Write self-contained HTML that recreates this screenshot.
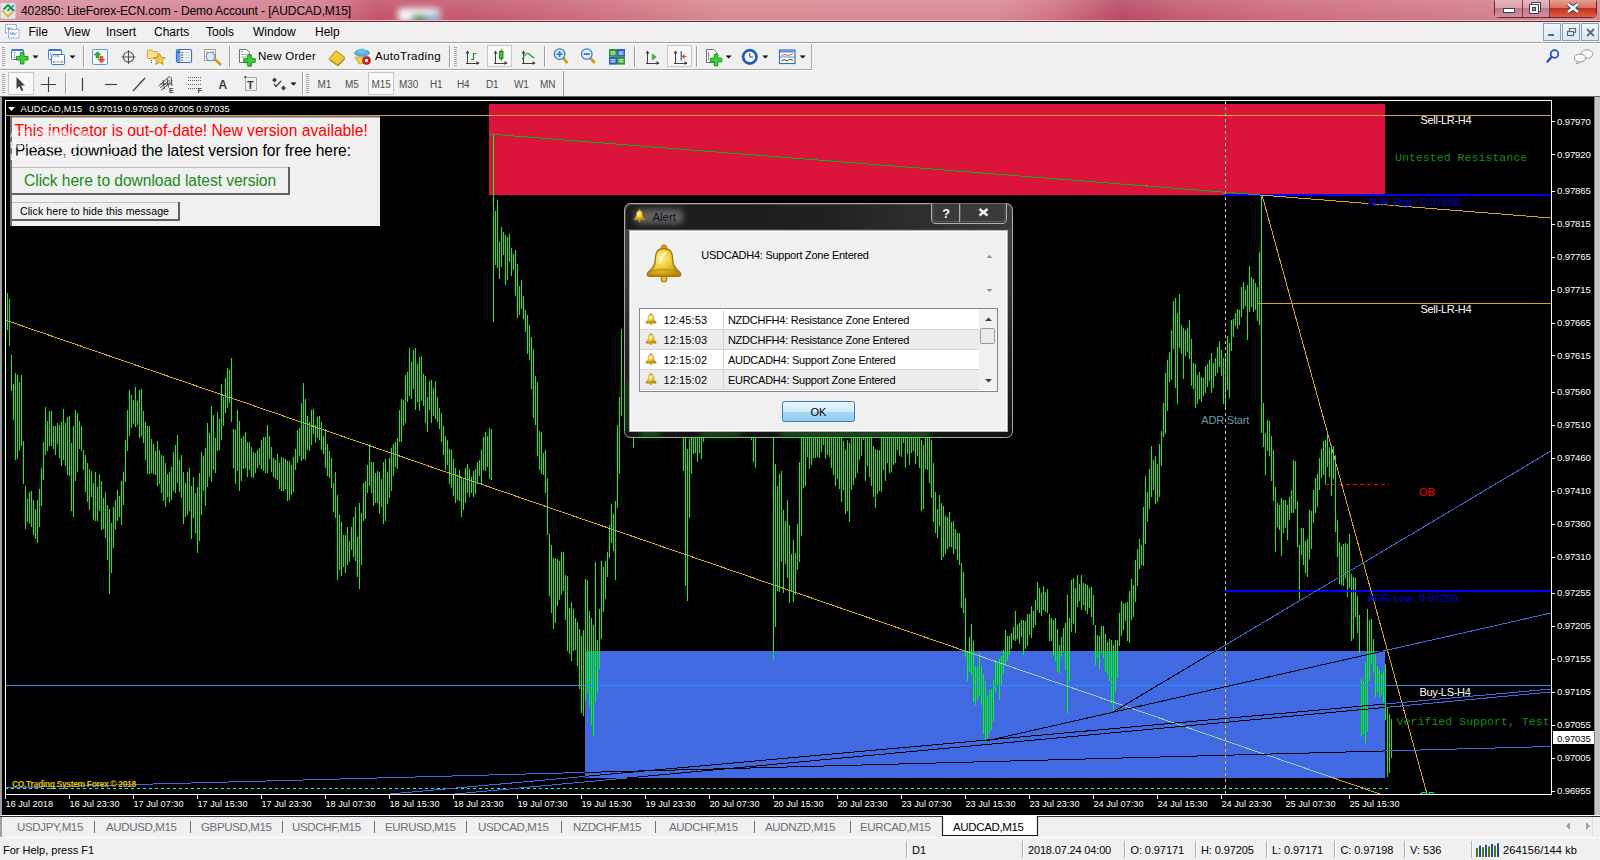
<!DOCTYPE html>
<html><head><meta charset="utf-8"><title>MT4</title>
<style>html,body{margin:0;padding:0;width:1600px;height:860px;overflow:hidden;background:#f0f0f0;}svg{display:block;}</style>
</head><body>
<svg width="1600" height="860" viewBox="0 0 1600 860" font-family="Liberation Sans, sans-serif">
<defs>
<linearGradient id="tb" x1="0" y1="0" x2="1" y2="0">
<stop offset="0" stop-color="#d8a0aa"/><stop offset="0.015" stop-color="#d8909c"/>
<stop offset="0.2" stop-color="#d47c8c"/><stop offset="0.235" stop-color="#c25268"/>
<stop offset="0.3" stop-color="#c45870"/><stop offset="0.36" stop-color="#cc6a7a"/>
<stop offset="0.45" stop-color="#d88890"/><stop offset="0.62" stop-color="#d88a94"/>
<stop offset="0.66" stop-color="#cf7080"/><stop offset="0.7" stop-color="#b84862"/>
<stop offset="0.74" stop-color="#c45a70"/><stop offset="0.8" stop-color="#cc6a7c"/>
<stop offset="0.92" stop-color="#d27c8a"/><stop offset="1" stop-color="#d88892"/></linearGradient>
<filter id="blur3" x="-50%" y="-50%" width="200%" height="200%"><feGaussianBlur stdDeviation="3"/></filter>
<filter id="blur2" x="-50%" y="-50%" width="200%" height="200%"><feGaussianBlur stdDeviation="2"/></filter>
<linearGradient id="tbv" x1="0" y1="0" x2="0" y2="1">
<stop offset="0" stop-color="#fff" stop-opacity="0.12"/><stop offset="1" stop-color="#fff" stop-opacity="0"/></linearGradient>
<linearGradient id="cls" x1="0" y1="0" x2="0" y2="1">
<stop offset="0" stop-color="#e8a090"/><stop offset="0.45" stop-color="#d87060"/><stop offset="0.5" stop-color="#c03020"/><stop offset="1" stop-color="#e06040"/></linearGradient>
<linearGradient id="mnb" x1="0" y1="0" x2="0" y2="1">
<stop offset="0" stop-color="#e8b8c0"/><stop offset="0.45" stop-color="#dca0ac"/><stop offset="0.5" stop-color="#c07888"/><stop offset="1" stop-color="#d090a0"/></linearGradient>
<linearGradient id="mdib" x1="0" y1="0" x2="0" y2="1">
<stop offset="0" stop-color="#f4f8fc"/><stop offset="0.5" stop-color="#e4eef8"/><stop offset="1" stop-color="#dce8f6"/></linearGradient>
<linearGradient id="okb" x1="0" y1="0" x2="0" y2="1">
<stop offset="0" stop-color="#eaf6fd"/><stop offset="0.5" stop-color="#d0ebfa"/><stop offset="0.51" stop-color="#a8d8f6"/><stop offset="1" stop-color="#90cbf0"/></linearGradient>
<linearGradient id="dlgt" x1="0" y1="0" x2="0" y2="1">
<stop offset="0" stop-color="#3a3a3a"/><stop offset="1" stop-color="#101010"/></linearGradient>
<radialGradient id="bell" cx="0.4" cy="0.35" r="0.7">
<stop offset="0" stop-color="#fff4a0"/><stop offset="0.5" stop-color="#f0c830"/><stop offset="1" stop-color="#b88a10"/></radialGradient>
</defs>
<rect x="0" y="0" width="1600" height="21" fill="url(#tb)" />
<rect x="0" y="0" width="1600" height="21" fill="url(#tbv)" />
<g filter="url(#blur3)"><rect x="398" y="8" width="42" height="14" rx="4" fill="#f4f4f8"/><ellipse cx="420" cy="19" rx="9" ry="5" fill="#4a9a60"/><ellipse cx="434" cy="17" rx="5" ry="5" fill="#80b8e0"/></g>
<rect x="0" y="20" width="1600" height="1" fill="#e8c0c8" />
<rect x="0" y="21" width="1600" height="1" fill="#5a3040" />
<rect x="0.5" y="3" width="15" height="15.8" rx="1.5" fill="#e4e8f0" opacity="0.92"/>
<path d="M2 10.5 L8 16.5 L13 11.5" fill="none" stroke="#e0b020" stroke-width="1.7"/>
<path d="M3.5 9.5 L8 5 L14 11" fill="none" stroke="#109030" stroke-width="1.8"/><path d="M7.5 11 L11 7.5" stroke="#109030" stroke-width="1.6"/>
<path d="M11.2 7.8 L14 5" stroke="#2080d0" stroke-width="1.5"/>
<text x="21" y="15" font-family="Liberation Sans" font-size="12" fill="#000" text-anchor="start" font-weight="normal" letter-spacing="-0.1" >402850: LiteForex-ECN.com - Demo Account - [AUDCAD,M15]</text>
<rect x="1494.5" y="-2" width="102" height="19.5" rx="4" fill="none" stroke="#5a2a30" stroke-width="1"/>
<rect x="1495" y="0" width="27" height="17" fill="url(#mnb)" />
<rect x="1523" y="0" width="26" height="17" fill="url(#mnb)" />
<rect x="1550" y="0" width="46" height="17" fill="url(#cls)" />
<line x1="1522.5" y1="0" x2="1522.5" y2="17" stroke="#7a3a48" stroke-width="1" />
<line x1="1549.5" y1="0" x2="1549.5" y2="17" stroke="#7a3a48" stroke-width="1" />
<rect x="1503.5" y="8.5" width="11" height="4" fill="#fff" stroke="#404050" stroke-width="1"/>
<rect x="1531" y="2" width="10" height="10" rx="1" fill="#404050"/><rect x="1532" y="3" width="8" height="8" fill="#fafafa"/>
<rect x="1529" y="4" width="10" height="10" rx="1" fill="#404050"/><rect x="1530" y="5" width="8" height="8" fill="#fafafa"/><rect x="1532" y="7" width="4" height="4" fill="#404050"/><rect x="1533" y="8" width="2" height="2" fill="#d08890"/>
<path d="M1568 4 L1578 12 M1578 4 L1568 12" stroke="#404050" stroke-width="4.2"/><path d="M1568 4 L1578 12 M1578 4 L1568 12" stroke="#fff" stroke-width="2.4"/>
<rect x="0" y="22" width="1600" height="20" fill="#f0f0f0" />
<rect x="0" y="42" width="1600" height="1" fill="#a0a0a0" />
<rect x="0" y="43" width="1600" height="1" fill="#ffffff" />
<rect x="5.5" y="24.5" width="11" height="8.5" fill="#fff" stroke="#5a8ee0" stroke-width="1" stroke-dasharray="1 0.6"/>
<path d="M7.5 28.5 H10 M8.5 27.5 L7.5 28.5 L8.5 29.5 M10.5 27 L12 28.5 L10.5 30" fill="none" stroke="#4070d0" stroke-width="0.8"/>
<rect x="8.5" y="29.5" width="10.5" height="8.5" fill="#fff" stroke="#5a8ee0" stroke-width="1" stroke-dasharray="1 0.6"/>
<path d="M10 32 L11.5 35 L13 32.5 L14.5 35 L16.5 32.5" fill="none" stroke="#4070d0" stroke-width="0.8"/>
<text x="28.5" y="35.5" font-family="Liberation Sans" font-size="12" fill="#000" text-anchor="start" font-weight="normal" >File</text>
<text x="64" y="35.5" font-family="Liberation Sans" font-size="12" fill="#000" text-anchor="start" font-weight="normal" >View</text>
<text x="106" y="35.5" font-family="Liberation Sans" font-size="12" fill="#000" text-anchor="start" font-weight="normal" >Insert</text>
<text x="154" y="35.5" font-family="Liberation Sans" font-size="12" fill="#000" text-anchor="start" font-weight="normal" >Charts</text>
<text x="206" y="35.5" font-family="Liberation Sans" font-size="12" fill="#000" text-anchor="start" font-weight="normal" >Tools</text>
<text x="253" y="35.5" font-family="Liberation Sans" font-size="12" fill="#000" text-anchor="start" font-weight="normal" >Window</text>
<text x="315" y="35.5" font-family="Liberation Sans" font-size="12" fill="#000" text-anchor="start" font-weight="normal" >Help</text>
<rect x="1543.5" y="23.5" width="17" height="17" fill="url(#mdib)" stroke="#8aa0b8" stroke-width="1"/>
<rect x="1562.5" y="23.5" width="17" height="17" fill="url(#mdib)" stroke="#8aa0b8" stroke-width="1"/>
<rect x="1581.5" y="23.5" width="17" height="17" fill="url(#mdib)" stroke="#8aa0b8" stroke-width="1"/>
<rect x="1548" y="34" width="6" height="2" fill="#606870" />
<rect x="1567.5" y="31.5" width="6" height="4" fill="none" stroke="#606870" stroke-width="1.2"/><path d="M1569.5 31 V28.5 H1575.5 V32.5 H1573.5" fill="none" stroke="#606870" stroke-width="1.2"/>
<path d="M1587 29 L1594 36 M1594 29 L1587 36" stroke="#606870" stroke-width="1.8"/>
<rect x="0" y="44" width="1600" height="25" fill="#f0f0f0" />
<rect x="0" y="69" width="812" height="1" fill="#a8a8a8" />
<rect x="0" y="70" width="812" height="1" fill="#ffffff" />
<rect x="811" y="44" width="1" height="26" fill="#b0b0b0" />
<rect x="2" y="47" width="3" height="1" fill="#a8a8a8" /><rect x="2" y="49" width="3" height="1" fill="#a8a8a8" /><rect x="2" y="51" width="3" height="1" fill="#a8a8a8" /><rect x="2" y="53" width="3" height="1" fill="#a8a8a8" /><rect x="2" y="55" width="3" height="1" fill="#a8a8a8" /><rect x="2" y="57" width="3" height="1" fill="#a8a8a8" /><rect x="2" y="59" width="3" height="1" fill="#a8a8a8" /><rect x="2" y="61" width="3" height="1" fill="#a8a8a8" /><rect x="2" y="63" width="3" height="1" fill="#a8a8a8" /><rect x="2" y="65" width="3" height="1" fill="#a8a8a8" />
<rect x="11.5" y="49.5" width="12" height="10" rx="1" fill="#fff" stroke="#3a78c8" stroke-width="1"/><rect x="11.5" y="49.5" width="12" height="1.5" fill="#3a78c8"/>
<path d="M14.5 52 V58 M13.5 53 L14.5 52 L15.5 53 M13.5 57 L14.5 58 L15.5 57" stroke="#8aa0c0" fill="none" stroke-width="0.8"/>
<path d="M20.4 52.45 H24.0 V56.400000000000006 H27.95 V60.0 H24.0 V63.95 H20.4 V60.0 H16.45 V56.400000000000006 H20.4 Z" fill="#3ad23a" stroke="#118a11" stroke-width="0.9"/>
<path d="M32.5 55.5 L38.5 55.5 L35.5 58.5 Z" fill="#000"/>
<rect x="48.5" y="49.5" width="13" height="10" rx="1" fill="#fff" stroke="#3a78c8"/><rect x="48.5" y="49.5" width="13" height="1.5" fill="#3a78c8"/>
<rect x="51.5" y="54.5" width="13" height="10" rx="1" fill="#fff" stroke="#3a78c8"/>
<path d="M50.5 52.5 V55 M50.5 56 H59 M57.5 55 L59 56 L57.5 57 M53 62 H63 M54.5 61 L53 62 L54.5 63 M61.5 61 L63 62 L61.5 63" stroke="#7890b0" fill="none" stroke-width="0.8"/>
<path d="M69.5 55.5 L75.5 55.5 L72.5 58.5 Z" fill="#000"/>
<rect x="83" y="46" width="1" height="21" fill="#a0a0a0" /><rect x="84" y="46" width="1" height="21" fill="#ffffff" />
<rect x="92.5" y="49.5" width="15" height="15" rx="1.5" fill="#fff" stroke="#5a9ae0" stroke-width="1"/>
<path d="M101 52 H106 M101 54.5 H106 M99 57 H106 M97 59.5 H106 M95 62 H106" stroke="#e0e0e0" stroke-width="0.8" stroke-dasharray="1 1"/>
<path d="M97.5 51.5 L101 55 H99 V58 H96 V55 H94 Z" fill="#30b030" stroke="#1a801a" stroke-width="0.5"/>
<path d="M101.5 63 L105 59.5 H103 V56.5 H100 V59.5 H98 Z" fill="#e85a30" stroke="#b03010" stroke-width="0.5"/>
<g stroke="#505050" fill="none" stroke-width="1.1"><circle cx="128.5" cy="57" r="5.2"/><path d="M128.5 50 V64 M121.5 57 H135.5"/></g>
<path d="M147.5 50 H152 L153 51.5 H157.5 V58.5 H147.5 Z" fill="#f8e08a" stroke="#c8a040" stroke-width="0.8"/>
<path d="M151.5 60 V64" stroke="#404040" stroke-width="0.9" stroke-dasharray="1 1"/>
<path d="M159.5 53.5 L161.3 57.3 L165.3 57.7 L162.3 60.4 L163.2 64.4 L159.5 62.3 L155.8 64.4 L156.7 60.4 L153.7 57.7 L157.7 57.3 Z" fill="#f2cc40" stroke="#b88a10" stroke-width="0.8"/>
<rect x="176.5" y="49.5" width="15" height="13" rx="1.5" fill="#fff" stroke="#3a70c0" stroke-width="1.2"/><rect x="177" y="50" width="3.5" height="12" fill="#6a9ae0"/>
<path d="M182 52.5 H190 M182 55 H190 M182 57.5 H190 M182 60 H190" stroke="#a8c0f0" stroke-width="0.7"/>
<circle cx="178.8" cy="52.2" r="0.7" fill="#000"/><circle cx="182" cy="52.5" r="0.7" fill="#e00"/><circle cx="182" cy="55" r="0.7" fill="#000"/><circle cx="182" cy="57.5" r="0.7" fill="#000"/><circle cx="182" cy="60" r="0.7" fill="#e00"/>
<rect x="204.5" y="49.5" width="11" height="11" fill="#fff" stroke="#a09080" stroke-width="0.9"/>
<path d="M207 51 V59 M213 51 V59" stroke="#606060" stroke-width="0.7"/>
<path d="M214 58.5 L221 65" stroke="#c8a020" stroke-width="2.4"/>
<circle cx="210.5" cy="56.5" r="4.3" fill="#d8ecfa" fill-opacity="0.85" stroke="#5a90d0" stroke-width="1.1"/>
<rect x="229" y="46" width="1" height="21" fill="#a0a0a0" /><rect x="230" y="46" width="1" height="21" fill="#ffffff" />
<path d="M239.5 49.5 H246.5 L249.5 52.5 V62.5 H239.5 Z" fill="#fff" stroke="#606060" stroke-width="0.9"/><path d="M241 51.5 H243 M241 54.5 H247 M241 57 H247" stroke="#909090" stroke-width="0.8"/>
<path d="M247.7 54.75 H251.3 V58.7 H255.25 V62.3 H251.3 V66.25 H247.7 V62.3 H243.75 V58.7 H247.7 Z" fill="#3ad23a" stroke="#118a11" stroke-width="0.9"/>
<text x="258" y="59.7" font-family="Liberation Sans" font-size="11.5" fill="#000" text-anchor="start" font-weight="normal" letter-spacing="0.27" >New Order</text>
<path d="M329 59 L336 50.5 L345 57.5 L338 65 Z" fill="#f0c838" stroke="#a07010" stroke-width="0.8"/><path d="M330 60.5 L338 66 L345 59" fill="none" stroke="#b88a20" stroke-width="1"/>
<path d="M355 57 L369 57 L367 63 L359 64 Z" fill="#f2d050" stroke="#b89020" stroke-width="0.7"/>
<ellipse cx="362" cy="53" rx="7.5" ry="3.2" fill="#60b0e0" stroke="#3080b0" stroke-width="0.6"/><ellipse cx="362" cy="51" rx="4" ry="2.5" fill="#70c0f0"/>
<circle cx="366.5" cy="60.5" r="4" fill="#d82020" stroke="#a01010" stroke-width="0.6"/><rect x="365" y="59" width="3" height="3" fill="#fff"/>
<text x="375" y="59.7" font-family="Liberation Sans" font-size="11.5" fill="#000" text-anchor="start" font-weight="normal" letter-spacing="0.34" >AutoTrading</text>
<rect x="449" y="46" width="1" height="21" fill="#a0a0a0" /><rect x="450" y="46" width="1" height="21" fill="#ffffff" />
<rect x="454" y="47" width="3" height="1" fill="#a8a8a8" /><rect x="454" y="49" width="3" height="1" fill="#a8a8a8" /><rect x="454" y="51" width="3" height="1" fill="#a8a8a8" /><rect x="454" y="53" width="3" height="1" fill="#a8a8a8" /><rect x="454" y="55" width="3" height="1" fill="#a8a8a8" /><rect x="454" y="57" width="3" height="1" fill="#a8a8a8" /><rect x="454" y="59" width="3" height="1" fill="#a8a8a8" /><rect x="454" y="61" width="3" height="1" fill="#a8a8a8" /><rect x="454" y="63" width="3" height="1" fill="#a8a8a8" /><rect x="454" y="65" width="3" height="1" fill="#a8a8a8" />
<g stroke="#404040" stroke-width="1" fill="none" shape-rendering="crispEdges"><path d="M467.5 51.5 V64.0 M465.5 63.0 H478.5"/></g><path d="M465.5 53.5 L467.5 50.5 L469.5 53.5 Z M476.5 61.0 L479.5 63.0 L476.5 65.0 Z" fill="#404040"/>
<path d="M473.5 53 V60 M473.5 53.5 H476.5 M473.5 59.5 H471" stroke="#209020" stroke-width="1.2" fill="none"/>
<rect x="487.5" y="45.5" width="24" height="21" fill="#f8f8f8" stroke="#c8c8c8" stroke-width="1"/>
<g stroke="#404040" stroke-width="1" fill="none" shape-rendering="crispEdges"><path d="M495.5 51.5 V64.0 M493.5 63.0 H506.5"/></g><path d="M493.5 53.5 L495.5 50.5 L497.5 53.5 Z M504.5 61.0 L507.5 63.0 L504.5 65.0 Z" fill="#404040"/>
<path d="M501.2 49 V61" stroke="#107010" stroke-width="1"/><rect x="499.5" y="51.5" width="3.5" height="7" fill="#30d030" stroke="#107010" stroke-width="0.8"/>
<g stroke="#404040" stroke-width="1" fill="none" shape-rendering="crispEdges"><path d="M523.5 51.5 V64.0 M521.5 63.0 H534.5"/></g><path d="M521.5 53.5 L523.5 50.5 L525.5 53.5 Z M532.5 61.0 L535.5 63.0 L532.5 65.0 Z" fill="#404040"/>
<path d="M522 59.5 Q527 51 529 54 L534 58" stroke="#209020" stroke-width="1.1" fill="none"/>
<rect x="544" y="46" width="1" height="21" fill="#a0a0a0" /><rect x="545" y="46" width="1" height="21" fill="#ffffff" />

<path d="M563.1 58 L567.6 63" stroke="#c8a020" stroke-width="2.8"/>
<circle cx="559.6" cy="54.1" r="5.3" fill="#e0f0fc" stroke="#3a78c8" stroke-width="1.3"/>
<path d="M556.6 54.1 H562.6 M559.6 51.1 V57.1" stroke="#3a78c8" stroke-width="1.8"/>

<path d="M590.3 58 L594.8 63" stroke="#c8a020" stroke-width="2.8"/>
<circle cx="586.8" cy="54.1" r="5.3" fill="#e0f0fc" stroke="#3a78c8" stroke-width="1.3"/>
<path d="M583.8 54.1 H589.8" stroke="#3a78c8" stroke-width="1.8"/>
<rect x="609" y="49" width="8" height="7.8" fill="#2e9a2e"/><rect x="617" y="49" width="8" height="7.8" fill="#2a5ec8"/><rect x="609" y="56.8" width="8" height="7.8" fill="#2a5ec8"/><rect x="617" y="56.8" width="8" height="7.8" fill="#2e9a2e"/>
<path d="M610.5 52 H615.5 M618.5 52 H623.5 M610.5 59.8 H615.5 M618.5 59.8 H623.5 M610.5 54 H615.5 M618.5 54 H623.5 M610.5 61.8 H615.5 M618.5 61.8 H623.5" stroke="#fff" stroke-width="1"/>
<rect x="634" y="46" width="1" height="21" fill="#a0a0a0" /><rect x="635" y="46" width="1" height="21" fill="#ffffff" />
<g stroke="#404040" stroke-width="1" fill="none" shape-rendering="crispEdges"><path d="M647.5 51.5 V64.0 M645.5 63.0 H658.5"/></g><path d="M645.5 53.5 L647.5 50.5 L649.5 53.5 Z M656.5 61.0 L659.5 63.0 L656.5 65.0 Z" fill="#404040"/>
<path d="M652.3 54 L656.3 57 L652.3 60 Z" fill="#40c040" stroke="#209020" stroke-width="0.6"/>
<rect x="667.5" y="45.5" width="24" height="21" fill="#f8f8f8" stroke="#c8c8c8" stroke-width="1"/>
<g stroke="#404040" stroke-width="1" fill="none" shape-rendering="crispEdges"><path d="M675.5 51.5 V64.0 M673.5 63.0 H686.5"/></g><path d="M673.5 53.5 L675.5 50.5 L677.5 53.5 Z M684.5 61.0 L687.5 63.0 L684.5 65.0 Z" fill="#404040"/>
<path d="M681.2 51 V60.5" stroke="#2a60a0" stroke-width="1.2"/><path d="M686.5 56.5 H683 M684.5 54.5 L682.5 56.5 L684.5 58.5" stroke="#e05020" stroke-width="1.2" fill="none"/>
<rect x="696" y="46" width="1" height="21" fill="#a0a0a0" /><rect x="697" y="46" width="1" height="21" fill="#ffffff" />
<path d="M706.5 49.5 H713.5 L716.5 52.5 V62.5 H706.5 Z" fill="#fff" stroke="#606060" stroke-width="0.9"/><path d="M708.5 52 V60 M708 55 H710" stroke="#707070" stroke-width="0.7"/>
<path d="M714.2 54.25 H717.8 V58.2 H721.75 V61.8 H717.8 V65.75 H714.2 V61.8 H710.25 V58.2 H714.2 Z" fill="#3ad23a" stroke="#118a11" stroke-width="0.9"/>
<path d="M725.6 55.5 L731.6 55.5 L728.6 58.5 Z" fill="#000"/>
<circle cx="749.8" cy="56.8" r="7.6" fill="#1e5ec0" stroke="#14408a" stroke-width="0.7"/><circle cx="749.8" cy="56.8" r="5.3" fill="#f8f8f8"/><path d="M749.8 53 V57 H753" stroke="#303030" stroke-width="0.9" fill="none"/>
<path d="M762.4 55.5 L768.4 55.5 L765.4 58.5 Z" fill="#000"/>
<rect x="779.5" y="50" width="15.5" height="13.5" fill="#fff" stroke="#3a70c0" stroke-width="1.2"/><rect x="780" y="50.5" width="14.5" height="2" fill="#5a90e0"/><path d="M780 57 H795" stroke="#3a70c0" stroke-width="0.8"/>
<path d="M781.5 55.5 L785 54.5 L788 55.5 L793 53.8 M781.5 61 L784 59.5 L787 61 L790 59.2 L793 60.5" fill="none" stroke="#c03020" stroke-width="0.8"/>
<path d="M781.5 61 L784 59.5 L787 61 L790 59.2 L793 60.5" fill="none" stroke="#209020" stroke-width="0.9"/>
<path d="M799.6 55.5 L805.6 55.5 L802.6 58.5 Z" fill="#000"/>
<circle cx="1554.5" cy="54" r="3.8" fill="none" stroke="#2050c0" stroke-width="1.7"/><path d="M1551.5 57 L1547.5 61.5" stroke="#2050c0" stroke-width="2.4" stroke-linecap="round"/>
<g fill="#f8f8f8" stroke="#909090" stroke-width="0.9"><ellipse cx="1587" cy="54" rx="6" ry="4.3"/><ellipse cx="1580" cy="58" rx="5.5" ry="4"/><path d="M1577.5 61.5 L1576.5 64 L1580.5 61.8"/></g>
<rect x="0" y="71" width="1600" height="25" fill="#f0f0f0" />
<rect x="0" y="96" width="1600" height="1" fill="#a0a0a0" />
<rect x="2" y="74" width="3" height="1" fill="#a8a8a8" /><rect x="2" y="76" width="3" height="1" fill="#a8a8a8" /><rect x="2" y="78" width="3" height="1" fill="#a8a8a8" /><rect x="2" y="80" width="3" height="1" fill="#a8a8a8" /><rect x="2" y="82" width="3" height="1" fill="#a8a8a8" /><rect x="2" y="84" width="3" height="1" fill="#a8a8a8" /><rect x="2" y="86" width="3" height="1" fill="#a8a8a8" /><rect x="2" y="88" width="3" height="1" fill="#a8a8a8" /><rect x="2" y="90" width="3" height="1" fill="#a8a8a8" /><rect x="2" y="92" width="3" height="1" fill="#a8a8a8" />
<rect x="8.5" y="72.5" width="25" height="22" fill="#f8f8f8" stroke="#c8c8c8" stroke-width="1"/>
<path d="M16.5 77 L16.5 89 L19.3 86.3 L21.5 91 L23.3 90.2 L21.2 85.6 L25 85.4 Z" fill="#404040"/>
<path d="M41 84.5 H56 M48.5 77 V92" stroke="#404040" stroke-width="1.1"/>
<rect x="65" y="73" width="1" height="21" fill="#a0a0a0" /><rect x="66" y="73" width="1" height="21" fill="#ffffff" />
<line x1="82.5" y1="78" x2="82.5" y2="91" stroke="#404040" stroke-width="1.2" />
<line x1="105" y1="84.5" x2="117" y2="84.5" stroke="#404040" stroke-width="1.2" />
<line x1="133" y1="91" x2="145" y2="78" stroke="#404040" stroke-width="1.2" />
<g stroke="#404040" stroke-width="0.9" fill="none"><path d="M158.5 86 L170 76 M161 90.5 L172.5 80.5 M160.5 84 L172 84 M160 88 L170 80 M163 80 L164.5 89 M167 78.5 L168.5 87.5 M171 77 L172 86"/></g>
<text x="169" y="93" font-family="Liberation Sans" font-size="7" fill="#404040" text-anchor="start" font-weight="bold" >E</text>
<g><rect x="188" y="77" width="1" height="1" fill="#606060" /><rect x="190" y="77" width="1" height="1" fill="#606060" /><rect x="192" y="77" width="1" height="1" fill="#606060" /><rect x="194" y="77" width="1" height="1" fill="#606060" /><rect x="196" y="77" width="1" height="1" fill="#606060" /><rect x="198" y="77" width="1" height="1" fill="#606060" /><rect x="200" y="77" width="1" height="1" fill="#606060" /><rect x="188" y="80" width="1" height="1" fill="#606060" /><rect x="190" y="80" width="1" height="1" fill="#606060" /><rect x="192" y="80" width="1" height="1" fill="#606060" /><rect x="194" y="80" width="1" height="1" fill="#606060" /><rect x="196" y="80" width="1" height="1" fill="#606060" /><rect x="198" y="80" width="1" height="1" fill="#606060" /><rect x="200" y="80" width="1" height="1" fill="#606060" /><rect x="188" y="84" width="1" height="1" fill="#606060" /><rect x="190" y="84" width="1" height="1" fill="#606060" /><rect x="192" y="84" width="1" height="1" fill="#606060" /><rect x="194" y="84" width="1" height="1" fill="#606060" /><rect x="196" y="84" width="1" height="1" fill="#606060" /><rect x="198" y="84" width="1" height="1" fill="#606060" /><rect x="200" y="84" width="1" height="1" fill="#606060" /><rect x="188" y="88" width="1" height="1" fill="#606060" /><rect x="190" y="88" width="1" height="1" fill="#606060" /><rect x="192" y="88" width="1" height="1" fill="#606060" /><rect x="194" y="88" width="1" height="1" fill="#606060" /><rect x="196" y="88" width="1" height="1" fill="#606060" /><rect x="198" y="88" width="1" height="1" fill="#606060" /><rect x="200" y="88" width="1" height="1" fill="#606060" /></g>
<text x="197.5" y="93" font-family="Liberation Sans" font-size="7" fill="#404040" text-anchor="start" font-weight="bold" >F</text>
<text x="218.5" y="89" font-family="Liberation Sans" font-size="12" fill="#404040" text-anchor="start" font-weight="bold" >A</text>
<rect x="245.5" y="77.5" width="11" height="13" fill="none" stroke="#505050" stroke-width="0.9" stroke-dasharray="1 1"/><path d="M244 76 L247 76.5 L245 78.5 Z" fill="#404040"/>
<text x="247" y="88.5" font-family="Liberation Sans" font-size="11" fill="#404040" text-anchor="start" font-weight="bold" >T</text>
<path d="M272 80 L274.5 77.5 L277 80 L274.5 82.5 Z M281 88 L283.5 85.5 L286 88 L283.5 90.5 Z" fill="#404040"/><path d="M274 84 L276 86.5 L281 81" stroke="#404040" stroke-width="1.3" fill="none"/>
<path d="M290.5 82.5 L296.5 82.5 L293.5 85.5 Z" fill="#000"/>
<rect x="302" y="72" width="1" height="23" fill="#a0a0a0" /><rect x="303" y="72" width="1" height="23" fill="#ffffff" />
<rect x="306" y="74" width="3" height="1" fill="#a8a8a8" /><rect x="306" y="76" width="3" height="1" fill="#a8a8a8" /><rect x="306" y="78" width="3" height="1" fill="#a8a8a8" /><rect x="306" y="80" width="3" height="1" fill="#a8a8a8" /><rect x="306" y="82" width="3" height="1" fill="#a8a8a8" /><rect x="306" y="84" width="3" height="1" fill="#a8a8a8" /><rect x="306" y="86" width="3" height="1" fill="#a8a8a8" /><rect x="306" y="88" width="3" height="1" fill="#a8a8a8" /><rect x="306" y="90" width="3" height="1" fill="#a8a8a8" /><rect x="306" y="92" width="3" height="1" fill="#a8a8a8" />
<rect x="368.5" y="72.5" width="25" height="22" fill="#f8f8f8" stroke="#c8c8c8" stroke-width="1"/>
<text x="317.5" y="88" font-family="Liberation Sans" font-size="10" fill="#505050" text-anchor="start" font-weight="normal" letter-spacing="-0.1" >M1</text>
<text x="345" y="88" font-family="Liberation Sans" font-size="10" fill="#505050" text-anchor="start" font-weight="normal" letter-spacing="-0.1" >M5</text>
<text x="371.5" y="88" font-family="Liberation Sans" font-size="10" fill="#505050" text-anchor="start" font-weight="normal" letter-spacing="-0.1" >M15</text>
<text x="399" y="88" font-family="Liberation Sans" font-size="10" fill="#505050" text-anchor="start" font-weight="normal" letter-spacing="-0.1" >M30</text>
<text x="430" y="88" font-family="Liberation Sans" font-size="10" fill="#505050" text-anchor="start" font-weight="normal" letter-spacing="-0.1" >H1</text>
<text x="457" y="88" font-family="Liberation Sans" font-size="10" fill="#505050" text-anchor="start" font-weight="normal" letter-spacing="-0.1" >H4</text>
<text x="486" y="88" font-family="Liberation Sans" font-size="10" fill="#505050" text-anchor="start" font-weight="normal" letter-spacing="-0.1" >D1</text>
<text x="514" y="88" font-family="Liberation Sans" font-size="10" fill="#505050" text-anchor="start" font-weight="normal" letter-spacing="-0.1" >W1</text>
<text x="540" y="88" font-family="Liberation Sans" font-size="10" fill="#505050" text-anchor="start" font-weight="normal" letter-spacing="-0.1" >MN</text>
<rect x="563" y="71" width="1" height="25" fill="#a0a0a0" />
<rect x="0" y="97" width="1600" height="718" fill="#000" />
<rect x="0" y="97" width="2" height="718" fill="#a0a0a0" />
<rect x="1594" y="97" width="6" height="718" fill="#c4c4c4" />
<rect x="1594" y="97" width="1" height="718" fill="#808080" />
<rect x="0" y="96" width="1600" height="1" fill="#606060" />
<rect x="489" y="104" width="896" height="91" fill="#DC143C" />
<rect x="585" y="651" width="800" height="127" fill="#4169E1" />
<path d="M5.5 294V338M7.5 293V330M9.5 299V346M11.5 355V391M13.5 384V420M15.5 373V460M17.5 375V459M19.5 382V451M21.5 375V446M23.5 441V484M25.5 486V529M27.5 499V522M29.5 492V524M31.5 491V527M33.5 500V535M35.5 509V539M37.5 500V543M39.5 489V527M41.5 468V506M43.5 442V480M45.5 407V455M47.5 421V451M49.5 411V446M51.5 411V446M53.5 426V449M55.5 426V455M57.5 423V444M59.5 425V458M61.5 422V466M63.5 409V460M65.5 423V466M67.5 417V475M69.5 416V476M71.5 443V511M73.5 426V517M75.5 410V481M77.5 413V472M79.5 421V449M81.5 426V451M83.5 450V470M85.5 455V492M87.5 463V502M89.5 469V510M91.5 471V497M93.5 483V520M95.5 472V521M97.5 487V521M99.5 474V511M101.5 481V530M103.5 498V529M105.5 492V538M107.5 505V560M109.5 509V594M111.5 523V573M113.5 507V548M115.5 500V530M117.5 490V521M119.5 496V517M121.5 481V525M123.5 472V505M125.5 440V482M127.5 410V451M129.5 390V436M131.5 395V428M133.5 400V424M135.5 387V427M137.5 401V425M139.5 390V438M141.5 389V436M143.5 411V443M145.5 422V460M147.5 426V474M149.5 426V474M151.5 439V473M153.5 444V474M155.5 451V475M157.5 441V486M159.5 450V484M161.5 455V493M163.5 456V501M165.5 463V507M167.5 474V497M169.5 472V502M171.5 467V500M173.5 452V491M175.5 445V493M177.5 435V483M179.5 460V492M181.5 455V498M183.5 472V524M185.5 483V517M187.5 472V515M189.5 468V511M191.5 486V539M193.5 477V518M195.5 493V533M197.5 487V553M199.5 473V541M201.5 452V515M203.5 456V491M205.5 448V506M207.5 423V487M209.5 433V477M211.5 406V482M213.5 415V470M215.5 438V473M217.5 412V451M219.5 419V450M221.5 384V440M223.5 397V426M225.5 378V413M227.5 368V408M229.5 370V403M231.5 358V422M233.5 429V468M235.5 430V484M237.5 410V471M239.5 421V491M241.5 438V481M243.5 436V469M245.5 432V468M247.5 442V477M249.5 442V470M251.5 447V477M253.5 452V478M255.5 453V473M257.5 450V468M259.5 448V465M261.5 440V469M263.5 437V471M265.5 437V473M267.5 425V473M269.5 436V459M271.5 447V472M273.5 458V477M275.5 460V479M277.5 454V480M279.5 463V489M281.5 457V491M283.5 458V491M285.5 459V489M287.5 461V501M289.5 461V500M291.5 465V495M293.5 457V492M295.5 449V470M297.5 430V463M299.5 428V456M301.5 403V461M303.5 383V459M305.5 399V460M307.5 416V450M309.5 422V451M311.5 410V445M313.5 409V434M315.5 425V443M317.5 417V438M319.5 416V440M321.5 422V450M323.5 436V454M325.5 429V468M327.5 444V476M329.5 451V478M331.5 458V488M333.5 483V512M335.5 472V518M337.5 495V580M339.5 515V570M341.5 522V576M343.5 535V567M345.5 535V573M347.5 527V565M349.5 541V562M351.5 527V550M353.5 517V557M355.5 507V561M357.5 537V577M359.5 503V589M361.5 513V565M363.5 483V521M365.5 481V519M367.5 465V493M369.5 444V486M371.5 462V493M373.5 462V506M375.5 473V503M377.5 471V503M379.5 472V514M381.5 479V507M383.5 462V524M385.5 459V521M387.5 472V504M389.5 458V498M391.5 448V491M393.5 444V476M395.5 442V467M397.5 438V469M399.5 410V442M401.5 399V442M403.5 400V426M405.5 375V423M407.5 372V402M409.5 348V396M411.5 362V399M413.5 350V389M415.5 348V410M417.5 364V402M419.5 357V411M421.5 356V401M423.5 374V406M425.5 376V423M427.5 397V432M429.5 381V410M431.5 380V423M433.5 388V416M435.5 381V419M437.5 397V422M439.5 408V429M441.5 413V442M443.5 426V455M445.5 436V470M447.5 440V465M449.5 449V484M451.5 450V488M453.5 459V496M455.5 468V503M457.5 478V500M459.5 470V501M461.5 478V517M463.5 479V510M465.5 468V503M467.5 464V493M469.5 469V497M471.5 477V493M473.5 471V497M475.5 469V494M477.5 462V484M479.5 460V476M481.5 450V485M483.5 437V470M485.5 432V471M487.5 436V467M489.5 428V479M491.5 429V480M493.5 135V322M495.5 211V265M497.5 200V268M499.5 242V279M501.5 227V267M503.5 232V255M505.5 235V285M507.5 237V280M509.5 234V262M511.5 248V276M513.5 254V270M515.5 250V296M517.5 264V318M519.5 286V315M521.5 280V309M523.5 296V319M525.5 310V332M527.5 315V354M529.5 325V360M531.5 337V389M533.5 349V418M535.5 376V425M537.5 382V456M539.5 431V470M541.5 432V474M543.5 453V475M545.5 450V493M547.5 478V535M549.5 534V596M551.5 545V613M553.5 558V629M555.5 558V623M557.5 559V606M559.5 561V600M561.5 552V595M563.5 552V591M565.5 575V620M567.5 576V651M569.5 608V654M571.5 602V661M573.5 609V651M575.5 618V650M577.5 622V666M579.5 629V689M581.5 636V713M583.5 630V716M585.5 579V701M587.5 580V693M589.5 611V707M591.5 618V725M593.5 625V736M595.5 562V703M597.5 640V693M599.5 609V669M601.5 561V639M603.5 567V612M605.5 561V599M607.5 552V577M609.5 525V558M611.5 504V543M613.5 514V551M615.5 501V580M617.5 425V508M619.5 397V474M621.5 329V416M625.5 299V361M627.5 318V353M629.5 320V381M631.5 367V406M633.5 379V448M635.5 380V427M637.5 361V405M639.5 332V402M641.5 329V391M643.5 341V376M645.5 324V395M647.5 316V372M649.5 299V370M651.5 287V360M653.5 317V391M655.5 330V373M657.5 325V370M659.5 300V378M661.5 319V391M663.5 325V396M665.5 340V380M667.5 345V416M669.5 350V421M671.5 363V405M673.5 364V409M675.5 369V406M677.5 374V407M679.5 372V414M681.5 380V431M683.5 400V471M685.5 429V586M687.5 449V601M689.5 439V518M691.5 428V474M693.5 399V454M695.5 408V453M697.5 409V462M699.5 414V453M701.5 399V459M703.5 397V442M705.5 388V435M707.5 367V428M709.5 359V421M711.5 362V404M713.5 358V424M715.5 359V404M717.5 358V407M719.5 353V429M721.5 339V410M723.5 348V412M725.5 354V427M727.5 370V412M729.5 359V420M731.5 381V414M733.5 370V430M735.5 370V427M737.5 368V424M739.5 363V399M741.5 380V426M743.5 384V425M745.5 388V421M747.5 392V418M749.5 390V430M751.5 403V440M753.5 396V462M755.5 400V468M757.5 379V426M759.5 386V422M761.5 385V429M763.5 382V411M765.5 379V426M767.5 402V427M769.5 389V431M771.5 394V432M773.5 420V660M775.5 464V627M777.5 486V591M779.5 474V592M781.5 471V562M783.5 510V593M785.5 521V564M787.5 500V578M789.5 525V603M791.5 554V592M793.5 540V602M795.5 553V595M797.5 524V570M799.5 462V562M801.5 400V536M803.5 403V488M805.5 420V486M807.5 411V457M809.5 420V469M811.5 431V465M813.5 424V458M815.5 429V458M817.5 420V457M819.5 401V458M821.5 399V452M823.5 413V445M825.5 413V459M827.5 416V455M829.5 410V457M831.5 407V468M833.5 408V475M835.5 417V486M837.5 430V479M839.5 420V489M841.5 430V502M843.5 441V490M845.5 450V514M847.5 440V511M849.5 443V522M851.5 422V490M853.5 424V485M855.5 426V478M857.5 410V473M859.5 426V460M861.5 400V456M863.5 402V440M865.5 416V481M867.5 420V466M869.5 420V477M871.5 424V486M873.5 446V497M875.5 449V508M877.5 450V494M879.5 450V491M881.5 438V492M883.5 436V470M885.5 420V481M887.5 424V463M889.5 412V473M891.5 420V472M893.5 419V465M895.5 412V463M897.5 413V450M899.5 401V456M901.5 399V457M903.5 403V443M905.5 421V468M907.5 398V454M909.5 407V465M911.5 405V453M913.5 419V451M915.5 410V464M917.5 420V456M919.5 424V468M921.5 440V511M923.5 445V509M925.5 422V469M927.5 397V470M929.5 399V483M931.5 440V498M933.5 463V522M935.5 492V533M937.5 509V538M939.5 495V526M941.5 503V560M943.5 506V557M945.5 516V554M947.5 517V549M949.5 512V547M951.5 522V547M953.5 521V554M955.5 529V549M957.5 533V560M959.5 533V565M961.5 563V608M963.5 572V613M965.5 598V657M967.5 652V681M969.5 637V672M971.5 624V675M973.5 641V702M975.5 666V705M977.5 667V700M979.5 652V696M981.5 666V705M983.5 674V734M985.5 681V742M987.5 696V740M989.5 690V733M991.5 689V730M993.5 680V722M995.5 660V692M997.5 663V686M999.5 659V700M1001.5 656V686M1003.5 650V674M1005.5 630V664M1007.5 636V661M1009.5 636V655M1011.5 633V649M1013.5 627V640M1015.5 611V641M1017.5 625V639M1019.5 623V644M1021.5 620V637M1023.5 620V655M1025.5 621V649M1027.5 614V646M1029.5 614V635M1031.5 606V638M1033.5 611V628M1035.5 600V625M1037.5 582V610M1039.5 588V613M1041.5 593V616M1043.5 586V610M1045.5 592V612M1047.5 589V613M1049.5 614V641M1051.5 618V641M1053.5 620V655M1055.5 618V661M1057.5 629V672M1059.5 645V673M1061.5 637V657M1063.5 628V652M1065.5 623V670M1067.5 595V713M1069.5 618V682M1071.5 580V632M1073.5 578V624M1075.5 588V633M1077.5 575V607M1079.5 584V601M1081.5 575V610M1083.5 583V605M1085.5 584V611M1087.5 585V614M1089.5 588V608M1091.5 587V617M1093.5 595V625M1095.5 625V665M1097.5 635V658M1099.5 636V669M1101.5 626V653M1103.5 626V658M1105.5 634V672M1107.5 642V675M1109.5 639V681M1111.5 640V703M1113.5 645V712M1115.5 640V692M1117.5 640V678M1119.5 613V646M1121.5 601V636M1123.5 603V630M1125.5 603V621M1127.5 602V641M1129.5 591V643M1131.5 579V620M1133.5 585V617M1135.5 560V602M1137.5 549V586M1139.5 539V569M1141.5 545V565M1143.5 507V566M1145.5 476V544M1147.5 492V522M1149.5 469V509M1151.5 446V497M1153.5 460V490M1155.5 456V504M1157.5 464V502M1159.5 444V497M1161.5 431V466M1163.5 403V437M1165.5 373V434M1167.5 360V411M1169.5 352V382M1171.5 330V380M1173.5 301V349M1175.5 298V388M1177.5 313V404M1179.5 294V348M1181.5 325V354M1183.5 328V379M1185.5 330V356M1187.5 328V352M1189.5 320V359M1191.5 339V386M1193.5 363V389M1195.5 364V408M1197.5 375V404M1199.5 372V399M1201.5 377V402M1203.5 378V396M1205.5 366V393M1207.5 364V387M1209.5 360V381M1211.5 353V393M1213.5 363V388M1215.5 358V376M1217.5 347V373M1219.5 341V367M1221.5 350V376M1223.5 358V404M1225.5 353V407M1227.5 336V390M1229.5 343V398M1231.5 320V351M1233.5 319V337M1235.5 313V326M1237.5 309V329M1239.5 310V325M1241.5 287V317M1243.5 282V309M1245.5 290V306M1247.5 285V340M1249.5 266V312M1251.5 277V307M1253.5 279V312M1255.5 283V310M1257.5 287V321M1259.5 252V325M1261.5 194V433M1263.5 403V447M1265.5 433V475M1267.5 420V451M1269.5 421V456M1271.5 436V481M1273.5 450V501M1275.5 487V552M1277.5 503V527M1279.5 505V530M1281.5 498V556M1283.5 500V533M1285.5 500V528M1287.5 505V540M1289.5 497V520M1291.5 490V513M1293.5 460V513M1295.5 461V509M1297.5 501V547M1299.5 545V600M1301.5 528V555M1303.5 528V565M1305.5 541V573M1307.5 539V577M1309.5 510V559M1311.5 511V549M1313.5 490V523M1315.5 478V513M1317.5 474V507M1319.5 458V490M1321.5 449V478M1323.5 441V475M1325.5 440V485M1327.5 432V467M1329.5 447V477M1331.5 448V496M1333.5 446V479M1335.5 455V532M1337.5 520V557M1339.5 542V584M1341.5 546V585M1343.5 544V586M1345.5 543V578M1347.5 544V597M1349.5 534V588M1351.5 574V641M1353.5 577V639M1355.5 578V617M1357.5 596V633M1359.5 615V653M1361.5 679V736M1363.5 681V734M1365.5 662V743M1367.5 609V732M1369.5 620V681M1371.5 619V664M1373.5 639V673M1375.5 655V697M1377.5 666V692M1379.5 670V697M1381.5 674V695M1383.5 671V703M1385.5 664V720M1387.5 707V777M1389.5 714V773M1391.5 719V758" stroke="#00ff00" stroke-width="1" fill="none" shape-rendering="crispEdges"/>
<defs><clipPath id="cred"><rect x="489" y="104" width="896" height="91"/></clipPath><clipPath id="cblue"><rect x="585" y="651" width="800" height="127"/></clipPath><clipPath id="cchart"><rect x="5" y="101" width="1546" height="693"/></clipPath></defs>
<g clip-path="url(#cchart)"><rect x="5" y="115" width="1546" height="1" fill="#DAA520" /><rect x="1225" y="194" width="326" height="2" fill="#0000FF" /><rect x="1258" y="303" width="293" height="1" fill="#DAA520" /><rect x="1225" y="590" width="326" height="2" fill="#0000FF" /><rect x="5" y="685" width="1546" height="1" fill="#1E90FF" /><line x1="5" y1="788.5" x2="1390" y2="788.5" stroke="#00FFFF" stroke-width="1" stroke-dasharray="3 3" shape-rendering="crispEdges"/><line x1="1325" y1="484.5" x2="1389" y2="484.5" stroke="#FF0000" stroke-width="1" stroke-dasharray="4 3" shape-rendering="crispEdges"/><line x1="5" y1="320" x2="1380" y2="794" stroke="#DAA520" stroke-width="1" shape-rendering="crispEdges"/><line x1="5" y1="320" x2="1380" y2="794" stroke="#9bccc1" stroke-width="1" shape-rendering="crispEdges" clip-path="url(#cblue)"/><line x1="489" y1="134" x2="1551" y2="218" stroke="#DAA520" stroke-width="1" shape-rendering="crispEdges"/><line x1="489" y1="134" x2="1551" y2="218" stroke="#06b51c" stroke-width="1" shape-rendering="crispEdges" clip-path="url(#cred)"/><line x1="1262" y1="195" x2="1427" y2="794" stroke="#DAA520" stroke-width="1" shape-rendering="crispEdges"/><line x1="1113" y1="712" x2="1551" y2="451" stroke="#4169E1" stroke-width="1" shape-rendering="crispEdges"/><line x1="1113" y1="712" x2="1551" y2="451" stroke="#000" stroke-width="1" shape-rendering="crispEdges" clip-path="url(#cblue)"/><line x1="986" y1="741" x2="1551" y2="613" stroke="#4169E1" stroke-width="1" shape-rendering="crispEdges"/><line x1="986" y1="741" x2="1551" y2="613" stroke="#000" stroke-width="1" shape-rendering="crispEdges" clip-path="url(#cblue)"/><line x1="390" y1="794" x2="1551" y2="689" stroke="#4169E1" stroke-width="1" shape-rendering="crispEdges"/><line x1="390" y1="794" x2="1551" y2="689" stroke="#000" stroke-width="1" shape-rendering="crispEdges" clip-path="url(#cblue)"/><line x1="455" y1="794" x2="1551" y2="692" stroke="#4169E1" stroke-width="1" shape-rendering="crispEdges"/><line x1="455" y1="794" x2="1551" y2="692" stroke="#000" stroke-width="1" shape-rendering="crispEdges" clip-path="url(#cblue)"/><line x1="5" y1="788" x2="1551" y2="746.5" stroke="#4169E1" stroke-width="1" shape-rendering="crispEdges"/><line x1="5" y1="788" x2="1551" y2="746.5" stroke="#000" stroke-width="1" shape-rendering="crispEdges" clip-path="url(#cblue)"/><line x1="1225.5" y1="101" x2="1225.5" y2="794" stroke="#c8c8c8" stroke-width="1" stroke-dasharray="3 3" shape-rendering="crispEdges"/><line x1="1225.5" y1="101" x2="1225.5" y2="794" stroke="#23eBc3" stroke-width="1" stroke-dasharray="3 3" shape-rendering="crispEdges" clip-path="url(#cred)"/><line x1="1225.5" y1="101" x2="1225.5" y2="794" stroke="#f0c020" stroke-width="1" stroke-dasharray="3 3" shape-rendering="crispEdges" clip-path="url(#cblue)"/></g>
<text x="1420.5" y="124.2" font-family="Liberation Sans" font-size="11" fill="#fff" text-anchor="start" font-weight="normal" letter-spacing="-0.3" >Sell-LR-H4</text>
<text x="1395" y="160.6" font-family="Liberation Mono" font-size="11.6" fill="#1a8a1a" text-anchor="start" font-weight="normal" >Untested Resistance</text>
<text x="1367" y="205.7" font-family="Liberation Sans" font-size="11" fill="#0000CD" text-anchor="start" font-weight="normal" letter-spacing="-0.1" >ADR High: 0.97858</text>
<text x="1420.5" y="313" font-family="Liberation Sans" font-size="11" fill="#fff" text-anchor="start" font-weight="normal" letter-spacing="-0.3" >Sell-LR-H4</text>
<text x="1201.3" y="424.2" font-family="Liberation Sans" font-size="11" fill="#6a9aaa" text-anchor="start" font-weight="normal" letter-spacing="-0.2" >ADR Start</text>
<text x="1419" y="496" font-family="Liberation Sans" font-size="11" fill="#FF0000" text-anchor="start" font-weight="normal" >OB</text>
<text x="1367.3" y="602" font-family="Liberation Sans" font-size="11" fill="#0000CD" text-anchor="start" font-weight="normal" letter-spacing="-0.1" >ADR Low: 0.97258</text>
<text x="1419.4" y="696.3" font-family="Liberation Sans" font-size="11" fill="#fff" text-anchor="start" font-weight="normal" letter-spacing="-0.3" >Buy-LS-H4</text>
<g clip-path="url(#cchart)"><text x="1396.6" y="725" font-family="Liberation Mono" font-size="11.6" fill="#1a8a1a" text-anchor="start" font-weight="normal" >Verified Support, Test</text><text x="1419.5" y="800" font-family="Liberation Sans" font-size="11" fill="#00FFFF" text-anchor="start" font-weight="normal" >OB</text></g>
<text x="12" y="787" font-family="Liberation Sans" font-size="8.5" fill="#e8c000" text-anchor="start" font-weight="bold" letter-spacing="-0.33" >CO.Trading System Forex © 2018</text>
<rect x="5.5" y="100.5" width="1546" height="694" fill="none" stroke="#fff" stroke-width="1" shape-rendering="crispEdges"/>
<path d="M8 107 L15 107 L11.5 111 Z" fill="#fff"/>
<text x="20.5" y="111.8" font-family="Liberation Sans" font-size="9.3" fill="#fff" text-anchor="start" font-weight="normal" letter-spacing="0.2" >AUDCAD,M15</text>
<text x="89.2" y="111.8" font-family="Liberation Sans" font-size="9.3" fill="#fff" text-anchor="start" font-weight="normal" letter-spacing="-0.06" >0.97019 0.97059 0.97005 0.97035</text>
<rect x="1552" y="121" width="3" height="1" fill="#fff" />
<text x="1557" y="125.0" font-family="Liberation Sans" font-size="9.6" fill="#fff" text-anchor="start" font-weight="normal" letter-spacing="-0.15" >0.97970</text>
<rect x="1552" y="154" width="3" height="1" fill="#fff" />
<text x="1557" y="157.97" font-family="Liberation Sans" font-size="9.6" fill="#fff" text-anchor="start" font-weight="normal" letter-spacing="-0.15" >0.97920</text>
<rect x="1552" y="191" width="3" height="1" fill="#fff" />
<text x="1557" y="194.237" font-family="Liberation Sans" font-size="9.6" fill="#fff" text-anchor="start" font-weight="normal" letter-spacing="-0.15" >0.97865</text>
<rect x="1552" y="224" width="3" height="1" fill="#fff" />
<text x="1557" y="227.207" font-family="Liberation Sans" font-size="9.6" fill="#fff" text-anchor="start" font-weight="normal" letter-spacing="-0.15" >0.97815</text>
<rect x="1552" y="257" width="3" height="1" fill="#fff" />
<text x="1557" y="260.177" font-family="Liberation Sans" font-size="9.6" fill="#fff" text-anchor="start" font-weight="normal" letter-spacing="-0.15" >0.97765</text>
<rect x="1552" y="290" width="3" height="1" fill="#fff" />
<text x="1557" y="293.14700000000005" font-family="Liberation Sans" font-size="9.6" fill="#fff" text-anchor="start" font-weight="normal" letter-spacing="-0.15" >0.97715</text>
<rect x="1552" y="323" width="3" height="1" fill="#fff" />
<text x="1557" y="326.117" font-family="Liberation Sans" font-size="9.6" fill="#fff" text-anchor="start" font-weight="normal" letter-spacing="-0.15" >0.97665</text>
<rect x="1552" y="355" width="3" height="1" fill="#fff" />
<text x="1557" y="359.087" font-family="Liberation Sans" font-size="9.6" fill="#fff" text-anchor="start" font-weight="normal" letter-spacing="-0.15" >0.97615</text>
<rect x="1552" y="392" width="3" height="1" fill="#fff" />
<text x="1557" y="395.35400000000004" font-family="Liberation Sans" font-size="9.6" fill="#fff" text-anchor="start" font-weight="normal" letter-spacing="-0.15" >0.97560</text>
<rect x="1552" y="425" width="3" height="1" fill="#fff" />
<text x="1557" y="428.32400000000007" font-family="Liberation Sans" font-size="9.6" fill="#fff" text-anchor="start" font-weight="normal" letter-spacing="-0.15" >0.97510</text>
<rect x="1552" y="458" width="3" height="1" fill="#fff" />
<text x="1557" y="461.294" font-family="Liberation Sans" font-size="9.6" fill="#fff" text-anchor="start" font-weight="normal" letter-spacing="-0.15" >0.97460</text>
<rect x="1552" y="491" width="3" height="1" fill="#fff" />
<text x="1557" y="494.264" font-family="Liberation Sans" font-size="9.6" fill="#fff" text-anchor="start" font-weight="normal" letter-spacing="-0.15" >0.97410</text>
<rect x="1552" y="524" width="3" height="1" fill="#fff" />
<text x="1557" y="527.234" font-family="Liberation Sans" font-size="9.6" fill="#fff" text-anchor="start" font-weight="normal" letter-spacing="-0.15" >0.97360</text>
<rect x="1552" y="557" width="3" height="1" fill="#fff" />
<text x="1557" y="560.2040000000001" font-family="Liberation Sans" font-size="9.6" fill="#fff" text-anchor="start" font-weight="normal" letter-spacing="-0.15" >0.97310</text>
<rect x="1552" y="593" width="3" height="1" fill="#fff" />
<text x="1557" y="596.471" font-family="Liberation Sans" font-size="9.6" fill="#fff" text-anchor="start" font-weight="normal" letter-spacing="-0.15" >0.97255</text>
<rect x="1552" y="626" width="3" height="1" fill="#fff" />
<text x="1557" y="629.441" font-family="Liberation Sans" font-size="9.6" fill="#fff" text-anchor="start" font-weight="normal" letter-spacing="-0.15" >0.97205</text>
<rect x="1552" y="659" width="3" height="1" fill="#fff" />
<text x="1557" y="662.411" font-family="Liberation Sans" font-size="9.6" fill="#fff" text-anchor="start" font-weight="normal" letter-spacing="-0.15" >0.97155</text>
<rect x="1552" y="692" width="3" height="1" fill="#fff" />
<text x="1557" y="695.381" font-family="Liberation Sans" font-size="9.6" fill="#fff" text-anchor="start" font-weight="normal" letter-spacing="-0.15" >0.97105</text>
<rect x="1552" y="725" width="3" height="1" fill="#fff" />
<text x="1557" y="728.351" font-family="Liberation Sans" font-size="9.6" fill="#fff" text-anchor="start" font-weight="normal" letter-spacing="-0.15" >0.97055</text>
<rect x="1552" y="758" width="3" height="1" fill="#fff" />
<text x="1557" y="761.321" font-family="Liberation Sans" font-size="9.6" fill="#fff" text-anchor="start" font-weight="normal" letter-spacing="-0.15" >0.97005</text>
<rect x="1552" y="791" width="3" height="1" fill="#fff" />
<text x="1557" y="794.2909999999999" font-family="Liberation Sans" font-size="9.6" fill="#fff" text-anchor="start" font-weight="normal" letter-spacing="-0.15" >0.96955</text>
<rect x="1553" y="731" width="41" height="13" fill="#fff" />
<text x="1557" y="741.6" font-family="Liberation Sans" font-size="9.6" fill="#000" text-anchor="start" font-weight="normal" letter-spacing="-0.15" >0.97035</text>
<rect x="5" y="795" width="1" height="4" fill="#fff" />
<text x="5.5" y="807" font-family="Liberation Sans" font-size="9.2" fill="#fff" text-anchor="start" font-weight="normal" letter-spacing="0" >16 Jul 2018</text>
<rect x="69" y="795" width="1" height="4" fill="#fff" />
<text x="69.5" y="807" font-family="Liberation Sans" font-size="9.2" fill="#fff" text-anchor="start" font-weight="normal" letter-spacing="0" >16 Jul 23:30</text>
<rect x="133" y="795" width="1" height="4" fill="#fff" />
<text x="133.5" y="807" font-family="Liberation Sans" font-size="9.2" fill="#fff" text-anchor="start" font-weight="normal" letter-spacing="0" >17 Jul 07:30</text>
<rect x="197" y="795" width="1" height="4" fill="#fff" />
<text x="197.5" y="807" font-family="Liberation Sans" font-size="9.2" fill="#fff" text-anchor="start" font-weight="normal" letter-spacing="0" >17 Jul 15:30</text>
<rect x="261" y="795" width="1" height="4" fill="#fff" />
<text x="261.5" y="807" font-family="Liberation Sans" font-size="9.2" fill="#fff" text-anchor="start" font-weight="normal" letter-spacing="0" >17 Jul 23:30</text>
<rect x="325" y="795" width="1" height="4" fill="#fff" />
<text x="325.5" y="807" font-family="Liberation Sans" font-size="9.2" fill="#fff" text-anchor="start" font-weight="normal" letter-spacing="0" >18 Jul 07:30</text>
<rect x="389" y="795" width="1" height="4" fill="#fff" />
<text x="389.5" y="807" font-family="Liberation Sans" font-size="9.2" fill="#fff" text-anchor="start" font-weight="normal" letter-spacing="0" >18 Jul 15:30</text>
<rect x="453" y="795" width="1" height="4" fill="#fff" />
<text x="453.5" y="807" font-family="Liberation Sans" font-size="9.2" fill="#fff" text-anchor="start" font-weight="normal" letter-spacing="0" >18 Jul 23:30</text>
<rect x="517" y="795" width="1" height="4" fill="#fff" />
<text x="517.5" y="807" font-family="Liberation Sans" font-size="9.2" fill="#fff" text-anchor="start" font-weight="normal" letter-spacing="0" >19 Jul 07:30</text>
<rect x="581" y="795" width="1" height="4" fill="#fff" />
<text x="581.5" y="807" font-family="Liberation Sans" font-size="9.2" fill="#fff" text-anchor="start" font-weight="normal" letter-spacing="0" >19 Jul 15:30</text>
<rect x="645" y="795" width="1" height="4" fill="#fff" />
<text x="645.5" y="807" font-family="Liberation Sans" font-size="9.2" fill="#fff" text-anchor="start" font-weight="normal" letter-spacing="0" >19 Jul 23:30</text>
<rect x="709" y="795" width="1" height="4" fill="#fff" />
<text x="709.5" y="807" font-family="Liberation Sans" font-size="9.2" fill="#fff" text-anchor="start" font-weight="normal" letter-spacing="0" >20 Jul 07:30</text>
<rect x="773" y="795" width="1" height="4" fill="#fff" />
<text x="773.5" y="807" font-family="Liberation Sans" font-size="9.2" fill="#fff" text-anchor="start" font-weight="normal" letter-spacing="0" >20 Jul 15:30</text>
<rect x="837" y="795" width="1" height="4" fill="#fff" />
<text x="837.5" y="807" font-family="Liberation Sans" font-size="9.2" fill="#fff" text-anchor="start" font-weight="normal" letter-spacing="0" >20 Jul 23:30</text>
<rect x="901" y="795" width="1" height="4" fill="#fff" />
<text x="901.5" y="807" font-family="Liberation Sans" font-size="9.2" fill="#fff" text-anchor="start" font-weight="normal" letter-spacing="0" >23 Jul 07:30</text>
<rect x="965" y="795" width="1" height="4" fill="#fff" />
<text x="965.5" y="807" font-family="Liberation Sans" font-size="9.2" fill="#fff" text-anchor="start" font-weight="normal" letter-spacing="0" >23 Jul 15:30</text>
<rect x="1029" y="795" width="1" height="4" fill="#fff" />
<text x="1029.5" y="807" font-family="Liberation Sans" font-size="9.2" fill="#fff" text-anchor="start" font-weight="normal" letter-spacing="0" >23 Jul 23:30</text>
<rect x="1093" y="795" width="1" height="4" fill="#fff" />
<text x="1093.5" y="807" font-family="Liberation Sans" font-size="9.2" fill="#fff" text-anchor="start" font-weight="normal" letter-spacing="0" >24 Jul 07:30</text>
<rect x="1157" y="795" width="1" height="4" fill="#fff" />
<text x="1157.5" y="807" font-family="Liberation Sans" font-size="9.2" fill="#fff" text-anchor="start" font-weight="normal" letter-spacing="0" >24 Jul 15:30</text>
<rect x="1221" y="795" width="1" height="4" fill="#fff" />
<text x="1221.5" y="807" font-family="Liberation Sans" font-size="9.2" fill="#fff" text-anchor="start" font-weight="normal" letter-spacing="0" >24 Jul 23:30</text>
<rect x="1285" y="795" width="1" height="4" fill="#fff" />
<text x="1285.5" y="807" font-family="Liberation Sans" font-size="9.2" fill="#fff" text-anchor="start" font-weight="normal" letter-spacing="0" >25 Jul 07:30</text>
<rect x="1349" y="795" width="1" height="4" fill="#fff" />
<text x="1349.5" y="807" font-family="Liberation Sans" font-size="9.2" fill="#fff" text-anchor="start" font-weight="normal" letter-spacing="0" >25 Jul 15:30</text>
<rect x="10" y="116" width="370" height="110" fill="#f0f0f0" />
<rect x="10" y="116" width="2" height="110" fill="#707070" />
<rect x="10" y="116" width="370" height="1.5" fill="#707070" />
<text x="14.5" y="135.7" font-family="Liberation Sans" font-size="15.6" fill="#FF0000" text-anchor="start" font-weight="normal" letter-spacing="0.01" >This indicator is out-of-date! New version available!</text>
<text x="15" y="155.7" font-family="Liberation Sans" font-size="15.6" fill="#000" text-anchor="start" font-weight="normal" letter-spacing="-0.06" >Please, download the latest version for free here:</text>
<text x="10" y="136.5" font-family="Liberation Sans" font-size="9.4" fill="#ffffff" text-anchor="start" font-weight="normal" >ADR: 71   Today: 63</text>
<text x="10" y="148" font-family="Liberation Sans" font-size="9.4" fill="#ffffff" text-anchor="start" font-weight="normal" >Distance from Bearish OB = 77</text>
<text x="10" y="160" font-family="Liberation Sans" font-size="9.4" fill="#ffffff" text-anchor="start" font-weight="normal" >Distance from Bullish OB = 365</text>
<rect x="12" y="167" width="278" height="28" fill="#f0f0f0" />
<rect x="12" y="167" width="278" height="1" fill="#c0c0c0" />
<rect x="12" y="193" width="278" height="2" fill="#606060" />
<rect x="288" y="167" width="2" height="28" fill="#606060" />
<text x="24" y="186.3" font-family="Liberation Sans" font-size="15.6" fill="#1a8a1a" text-anchor="start" font-weight="normal" letter-spacing="-0.05" >Click here to download latest version</text>
<rect x="12" y="202" width="168" height="1" fill="#c0c0c0" />
<rect x="12" y="219" width="168" height="2" fill="#606060" />
<rect x="178" y="202" width="2" height="19" fill="#606060" />
<text x="20" y="214.6" font-family="Liberation Sans" font-size="10.6" fill="#000" text-anchor="start" font-weight="normal" letter-spacing="0.06" >Click here to hide this message</text>
<defs><linearGradient id="dlgf" x1="0" y1="0" x2="0" y2="1"><stop offset="0" stop-color="#484848"/><stop offset="0.35" stop-color="#3a3a3a"/><stop offset="0.7" stop-color="#202020"/><stop offset="1" stop-color="#141414"/></linearGradient><linearGradient id="dlgth" x1="0" y1="0" x2="1" y2="0"><stop offset="0" stop-color="#1a1a1a"/><stop offset="0.5" stop-color="#202020"/><stop offset="1" stop-color="#3a3a3a"/></linearGradient></defs>
<rect x="624.5" y="203.5" width="388" height="234" rx="6" fill="url(#dlgf)" stroke="#a8a8a8" stroke-width="1"/>
<path d="M626 212 Q626 205 633 205 H1004 Q1011 205 1011 212 V229 H626 Z" fill="url(#dlgth)"/>
<g filter="url(#blur3)" opacity="0.75"><rect x="640" y="432" width="20" height="4" fill="#20a020"/><rect x="700" y="432" width="40" height="4" fill="#209020"/><rect x="780" y="432" width="150" height="4" fill="#20a020"/><rect x="626" y="380" width="3" height="50" fill="#108010"/></g>
<rect x="634" y="209" width="50" height="15" rx="7" fill="#ffffff" opacity="0.3" filter="url(#blur3)"/>
<g transform="translate(633,209) scale(0.34210526315789475)"><circle cx="19" cy="3.5" r="2.6" fill="#d8a820" stroke="#a07810" stroke-width="1"/><path d="M19 4.5 C13 4.5 10.5 8.5 10.5 14 C10.5 21 8.5 24 3 28.5 C1.8 29.6 2 31.8 4 32.2 L34 32.2 C36 31.8 36.2 29.6 35 28.5 C29.5 24 27.5 21 27.5 14 C27.5 8.5 25 4.5 19 4.5 Z" fill="url(#bell)" stroke="#a07810" stroke-width="1.4"/><path d="M5 27.5 Q19 23.5 33 27.5" fill="none" stroke="#b88a10" stroke-width="1.2"/><circle cx="19" cy="35" r="2.8" fill="#e8c030" stroke="#a07810" stroke-width="1.1"/><path d="M21 8 Q16 12 15 20" stroke="#fffbe0" stroke-width="2" fill="none" opacity="0.8"/></g>
<text x="652.4" y="220.7" font-family="Liberation Sans" font-size="11.5" fill="#101020" text-anchor="start" font-weight="normal" >Alert</text>
<path d="M931.5 203.5 V219 Q931.5 223.5 936 223.5 H1002 Q1006.5 223.5 1006.5 219 V203.5" fill="#3a3a3a" stroke="#b0b0b0" stroke-width="1"/>
<path d="M933 204 V218 Q933 221.5 936.5 221.5 H1001.5 Q1005 221.5 1005 218 V204" fill="none" stroke="#5a5a5a" stroke-width="1"/>
<line x1="959.5" y1="204" x2="959.5" y2="222" stroke="#b0b0b0" stroke-width="1" />
<line x1="960.5" y1="204" x2="960.5" y2="222" stroke="#5a5a5a" stroke-width="1" />
<text x="946" y="217.5" font-family="Liberation Sans" font-size="12.5" fill="#fff" text-anchor="middle" font-weight="bold" >?</text>
<path d="M979.5 209 L987.5 215.5 M987.5 209 L979.5 215.5" stroke="#f0f0f0" stroke-width="2.6"/>
<rect x="629.5" y="230.5" width="378" height="201" fill="none" stroke="#b0b0b0" stroke-width="1"/>
<rect x="630.5" y="231.5" width="376" height="199" fill="#f0f0f0" stroke="#ffffff" stroke-width="1"/>
<g transform="translate(645,244) scale(1.0)"><circle cx="19" cy="3.5" r="2.6" fill="#d8a820" stroke="#a07810" stroke-width="1"/><path d="M19 4.5 C13 4.5 10.5 8.5 10.5 14 C10.5 21 8.5 24 3 28.5 C1.8 29.6 2 31.8 4 32.2 L34 32.2 C36 31.8 36.2 29.6 35 28.5 C29.5 24 27.5 21 27.5 14 C27.5 8.5 25 4.5 19 4.5 Z" fill="url(#bell)" stroke="#a07810" stroke-width="1.4"/><path d="M5 27.5 Q19 23.5 33 27.5" fill="none" stroke="#b88a10" stroke-width="1.2"/><circle cx="19" cy="35" r="2.8" fill="#e8c030" stroke="#a07810" stroke-width="1.1"/><path d="M21 8 Q16 12 15 20" stroke="#fffbe0" stroke-width="2" fill="none" opacity="0.8"/></g>
<text x="701.3" y="259" font-family="Liberation Sans" font-size="11" fill="#000" text-anchor="start" font-weight="normal" letter-spacing="-0.25" >USDCADH4: Support Zone Entered</text>
<rect x="982" y="248" width="15" height="52" fill="#f0f0f0" />
<path d="M986.5 258 L989.5 255 L992.5 258 Z" fill="#909090"/><path d="M986.5 289 L989.5 292 L992.5 289 Z" fill="#909090"/>
<rect x="639.5" y="308.5" width="358" height="83" fill="#fff" stroke="#828790" stroke-width="1"/>
<rect x="640" y="310" width="339" height="20" fill="#ffffff" />
<rect x="640" y="329" width="339" height="1" fill="#d4d4d4" />
<g transform="translate(645,313) scale(0.3157894736842105)"><circle cx="19" cy="3.5" r="2.6" fill="#d8a820" stroke="#a07810" stroke-width="1"/><path d="M19 4.5 C13 4.5 10.5 8.5 10.5 14 C10.5 21 8.5 24 3 28.5 C1.8 29.6 2 31.8 4 32.2 L34 32.2 C36 31.8 36.2 29.6 35 28.5 C29.5 24 27.5 21 27.5 14 C27.5 8.5 25 4.5 19 4.5 Z" fill="url(#bell)" stroke="#a07810" stroke-width="1.4"/><path d="M5 27.5 Q19 23.5 33 27.5" fill="none" stroke="#b88a10" stroke-width="1.2"/><circle cx="19" cy="35" r="2.8" fill="#e8c030" stroke="#a07810" stroke-width="1.1"/><path d="M21 8 Q16 12 15 20" stroke="#fffbe0" stroke-width="2" fill="none" opacity="0.8"/></g>
<text x="663.4" y="324.4" font-family="Liberation Sans" font-size="11" fill="#000" text-anchor="start" font-weight="normal" letter-spacing="0.14" >12:45:53</text>
<text x="727.9" y="324.4" font-family="Liberation Sans" font-size="11" fill="#000" text-anchor="start" font-weight="normal" letter-spacing="-0.25" >NZDCHFH4: Resistance Zone Entered</text>
<rect x="640" y="330" width="339" height="20" fill="#ececec" />
<rect x="640" y="349" width="339" height="1" fill="#d4d4d4" />
<g transform="translate(645,333) scale(0.3157894736842105)"><circle cx="19" cy="3.5" r="2.6" fill="#d8a820" stroke="#a07810" stroke-width="1"/><path d="M19 4.5 C13 4.5 10.5 8.5 10.5 14 C10.5 21 8.5 24 3 28.5 C1.8 29.6 2 31.8 4 32.2 L34 32.2 C36 31.8 36.2 29.6 35 28.5 C29.5 24 27.5 21 27.5 14 C27.5 8.5 25 4.5 19 4.5 Z" fill="url(#bell)" stroke="#a07810" stroke-width="1.4"/><path d="M5 27.5 Q19 23.5 33 27.5" fill="none" stroke="#b88a10" stroke-width="1.2"/><circle cx="19" cy="35" r="2.8" fill="#e8c030" stroke="#a07810" stroke-width="1.1"/><path d="M21 8 Q16 12 15 20" stroke="#fffbe0" stroke-width="2" fill="none" opacity="0.8"/></g>
<text x="663.4" y="344.4" font-family="Liberation Sans" font-size="11" fill="#000" text-anchor="start" font-weight="normal" letter-spacing="0.14" >12:15:03</text>
<text x="727.9" y="344.4" font-family="Liberation Sans" font-size="11" fill="#000" text-anchor="start" font-weight="normal" letter-spacing="-0.25" >NZDCHFH4: Resistance Zone Entered</text>
<rect x="640" y="350" width="339" height="20" fill="#ffffff" />
<rect x="640" y="369" width="339" height="1" fill="#d4d4d4" />
<g transform="translate(645,353) scale(0.3157894736842105)"><circle cx="19" cy="3.5" r="2.6" fill="#d8a820" stroke="#a07810" stroke-width="1"/><path d="M19 4.5 C13 4.5 10.5 8.5 10.5 14 C10.5 21 8.5 24 3 28.5 C1.8 29.6 2 31.8 4 32.2 L34 32.2 C36 31.8 36.2 29.6 35 28.5 C29.5 24 27.5 21 27.5 14 C27.5 8.5 25 4.5 19 4.5 Z" fill="url(#bell)" stroke="#a07810" stroke-width="1.4"/><path d="M5 27.5 Q19 23.5 33 27.5" fill="none" stroke="#b88a10" stroke-width="1.2"/><circle cx="19" cy="35" r="2.8" fill="#e8c030" stroke="#a07810" stroke-width="1.1"/><path d="M21 8 Q16 12 15 20" stroke="#fffbe0" stroke-width="2" fill="none" opacity="0.8"/></g>
<text x="663.4" y="364.4" font-family="Liberation Sans" font-size="11" fill="#000" text-anchor="start" font-weight="normal" letter-spacing="0.14" >12:15:02</text>
<text x="727.9" y="364.4" font-family="Liberation Sans" font-size="11" fill="#000" text-anchor="start" font-weight="normal" letter-spacing="-0.25" >AUDCADH4: Support Zone Entered</text>
<rect x="640" y="370" width="339" height="20" fill="#ececec" />
<rect x="640" y="389" width="339" height="1" fill="#d4d4d4" />
<g transform="translate(645,373) scale(0.3157894736842105)"><circle cx="19" cy="3.5" r="2.6" fill="#d8a820" stroke="#a07810" stroke-width="1"/><path d="M19 4.5 C13 4.5 10.5 8.5 10.5 14 C10.5 21 8.5 24 3 28.5 C1.8 29.6 2 31.8 4 32.2 L34 32.2 C36 31.8 36.2 29.6 35 28.5 C29.5 24 27.5 21 27.5 14 C27.5 8.5 25 4.5 19 4.5 Z" fill="url(#bell)" stroke="#a07810" stroke-width="1.4"/><path d="M5 27.5 Q19 23.5 33 27.5" fill="none" stroke="#b88a10" stroke-width="1.2"/><circle cx="19" cy="35" r="2.8" fill="#e8c030" stroke="#a07810" stroke-width="1.1"/><path d="M21 8 Q16 12 15 20" stroke="#fffbe0" stroke-width="2" fill="none" opacity="0.8"/></g>
<text x="663.4" y="384.4" font-family="Liberation Sans" font-size="11" fill="#000" text-anchor="start" font-weight="normal" letter-spacing="0.14" >12:15:02</text>
<text x="727.9" y="384.4" font-family="Liberation Sans" font-size="11" fill="#000" text-anchor="start" font-weight="normal" letter-spacing="-0.25" >EURCADH4: Support Zone Entered</text>
<rect x="723" y="310" width="1" height="80" fill="#d4d4d4" />
<rect x="979" y="309" width="18" height="81" fill="#f0f0f0" />
<path d="M985 321 L988.5 317.5 L992 321 Z" fill="#404040"/><path d="M985 379 L988.5 382.5 L992 379 Z" fill="#404040"/>
<rect x="980.5" y="328.5" width="14" height="15" rx="1" fill="#eaeaea" stroke="#9a9a9a" stroke-width="1"/>
<rect x="782.5" y="401.5" width="72" height="20" rx="2" fill="url(#okb)" stroke="#3c7fb1" stroke-width="1"/>
<text x="818.5" y="416" font-family="Liberation Sans" font-size="11" fill="#000" text-anchor="middle" font-weight="normal" >OK</text>
<rect x="0" y="815" width="1600" height="1" fill="#ffffff" />
<rect x="0" y="816" width="1600" height="1" fill="#303030" />
<rect x="0" y="817" width="1600" height="20" fill="#f0f0f0" />
<rect x="0" y="817" width="2" height="20" fill="#a0a0a0" />
<rect x="1592" y="817" width="1" height="20" fill="#e0e0e0" />
<text x="17" y="831" font-family="Liberation Sans" font-size="11.5" fill="#6d6d78" text-anchor="start" font-weight="normal" letter-spacing="-0.35" >USDJPY,M15</text>
<rect x="94" y="821" width="1" height="12" fill="#707070" />
<text x="106" y="831" font-family="Liberation Sans" font-size="11.5" fill="#6d6d78" text-anchor="start" font-weight="normal" letter-spacing="-0.35" >AUDUSD,M15</text>
<rect x="190" y="821" width="1" height="12" fill="#707070" />
<text x="201" y="831" font-family="Liberation Sans" font-size="11.5" fill="#6d6d78" text-anchor="start" font-weight="normal" letter-spacing="-0.35" >GBPUSD,M15</text>
<rect x="282" y="821" width="1" height="12" fill="#707070" />
<text x="292" y="831" font-family="Liberation Sans" font-size="11.5" fill="#6d6d78" text-anchor="start" font-weight="normal" letter-spacing="-0.35" >USDCHF,M15</text>
<rect x="374" y="821" width="1" height="12" fill="#707070" />
<text x="385" y="831" font-family="Liberation Sans" font-size="11.5" fill="#6d6d78" text-anchor="start" font-weight="normal" letter-spacing="-0.35" >EURUSD,M15</text>
<rect x="466" y="821" width="1" height="12" fill="#707070" />
<text x="478" y="831" font-family="Liberation Sans" font-size="11.5" fill="#6d6d78" text-anchor="start" font-weight="normal" letter-spacing="-0.35" >USDCAD,M15</text>
<rect x="561" y="821" width="1" height="12" fill="#707070" />
<text x="573" y="831" font-family="Liberation Sans" font-size="11.5" fill="#6d6d78" text-anchor="start" font-weight="normal" letter-spacing="-0.35" >NZDCHF,M15</text>
<rect x="655" y="821" width="1" height="12" fill="#707070" />
<text x="669" y="831" font-family="Liberation Sans" font-size="11.5" fill="#6d6d78" text-anchor="start" font-weight="normal" letter-spacing="-0.35" >AUDCHF,M15</text>
<rect x="754" y="821" width="1" height="12" fill="#707070" />
<text x="765" y="831" font-family="Liberation Sans" font-size="11.5" fill="#6d6d78" text-anchor="start" font-weight="normal" letter-spacing="-0.35" >AUDNZD,M15</text>
<rect x="850" y="821" width="1" height="12" fill="#707070" />
<text x="860" y="831" font-family="Liberation Sans" font-size="11.5" fill="#6d6d78" text-anchor="start" font-weight="normal" letter-spacing="-0.35" >EURCAD,M15</text>
<rect x="942" y="815" width="96" height="21" fill="#ffffff" />
<path d="M942.5 816 V835.5 H1037.5 V816" fill="none" stroke="#202020" stroke-width="1.2"/>
<text x="953" y="831" font-family="Liberation Sans" font-size="11.5" fill="#000" text-anchor="start" font-weight="normal" letter-spacing="-0.35" >AUDCAD,M15</text>
<path d="M1566 826 L1570 822 L1570 830 Z" fill="#a0a0a0"/><path d="M1590 826 L1586 822 L1586 830 Z" fill="#a0a0a0"/>
<rect x="0" y="837" width="1600" height="23" fill="#f0f0f0" />
<rect x="0" y="837" width="1600" height="1" fill="#ffffff" />
<text x="3" y="854" font-family="Liberation Sans" font-size="11" fill="#000" text-anchor="start" font-weight="normal" >For Help, press F1</text>
<rect x="906" y="841" width="1" height="17" fill="#b0b0b0" />
<rect x="907" y="841" width="1" height="17" fill="#ffffff" />
<rect x="1022" y="841" width="1" height="17" fill="#b0b0b0" />
<rect x="1023" y="841" width="1" height="17" fill="#ffffff" />
<rect x="1124" y="841" width="1" height="17" fill="#b0b0b0" />
<rect x="1125" y="841" width="1" height="17" fill="#ffffff" />
<rect x="1195" y="841" width="1" height="17" fill="#b0b0b0" />
<rect x="1196" y="841" width="1" height="17" fill="#ffffff" />
<rect x="1266" y="841" width="1" height="17" fill="#b0b0b0" />
<rect x="1267" y="841" width="1" height="17" fill="#ffffff" />
<rect x="1334" y="841" width="1" height="17" fill="#b0b0b0" />
<rect x="1335" y="841" width="1" height="17" fill="#ffffff" />
<rect x="1404" y="841" width="1" height="17" fill="#b0b0b0" />
<rect x="1405" y="841" width="1" height="17" fill="#ffffff" />
<rect x="1471" y="841" width="1" height="17" fill="#b0b0b0" />
<rect x="1472" y="841" width="1" height="17" fill="#ffffff" />
<text x="912" y="854" font-family="Liberation Sans" font-size="11" fill="#000" text-anchor="start" font-weight="normal" letter-spacing="0" >D1</text>
<text x="1028" y="854" font-family="Liberation Sans" font-size="11" fill="#000" text-anchor="start" font-weight="normal" letter-spacing="-0.16" >2018.07.24 04:00</text>
<text x="1130.5" y="854" font-family="Liberation Sans" font-size="11" fill="#000" text-anchor="start" font-weight="normal" letter-spacing="-0.1" >O: 0.97171</text>
<text x="1201" y="854" font-family="Liberation Sans" font-size="11" fill="#000" text-anchor="start" font-weight="normal" letter-spacing="-0.1" >H: 0.97205</text>
<text x="1272" y="854" font-family="Liberation Sans" font-size="11" fill="#000" text-anchor="start" font-weight="normal" letter-spacing="-0.1" >L: 0.97171</text>
<text x="1340.5" y="854" font-family="Liberation Sans" font-size="11" fill="#000" text-anchor="start" font-weight="normal" letter-spacing="-0.1" >C: 0.97198</text>
<text x="1410" y="854" font-family="Liberation Sans" font-size="11" fill="#000" text-anchor="start" font-weight="normal" letter-spacing="0" >V: 536</text>
<text x="1503" y="854" font-family="Liberation Sans" font-size="11" fill="#000" text-anchor="start" font-weight="normal" letter-spacing="0.09" >264156/144 kb</text>
<rect x="1476" y="848.0" width="2" height="9.0" fill="#4a7a18" />
<rect x="1479" y="845.6" width="2" height="11.4" fill="#2a4a90" />
<rect x="1482" y="847.2" width="2" height="9.8" fill="#4a7a18" />
<rect x="1485" y="844.8" width="2" height="12.2" fill="#2a4a90" />
<rect x="1488" y="846.4" width="2" height="10.6" fill="#4a7a18" />
<rect x="1491" y="844.0" width="2" height="13.0" fill="#2a4a90" />
<rect x="1494" y="845.6" width="2" height="11.4" fill="#4a7a18" />
<rect x="1497" y="843.2" width="2" height="13.8" fill="#2a4a90" />
</svg>
</body></html>
